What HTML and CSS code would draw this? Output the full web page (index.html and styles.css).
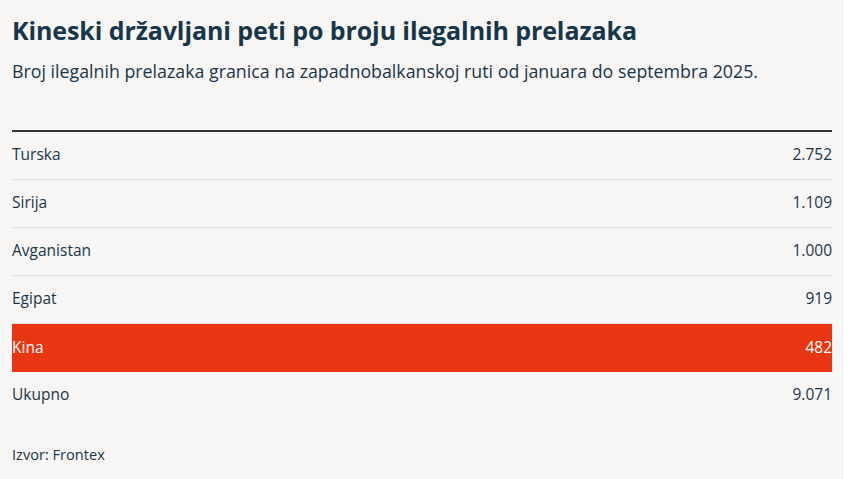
FILE: index.html
```html
<!DOCTYPE html>
<html lang="sr">
<head>
<meta charset="utf-8">
<link rel="stylesheet" href="styles.css">
<title>Kineski državljani</title>
</head>
<body>
<div class="page">
  <h1 class="title">Kineski državljani peti po broju ilegalnih prelazaka</h1>
  <p class="subtitle">Broj ilegalnih prelazaka granica na zapadnobalkanskoj ruti od januara do septembra 2025.</p>
  <div class="table">
    <div class="row"><span>Turska</span><span>2.752</span></div>
    <div class="row"><span>Sirija</span><span>1.109</span></div>
    <div class="row"><span>Avganistan</span><span>1.000</span></div>
    <div class="row"><span>Egipat</span><span>919</span></div>
    <div class="row highlight"><span>Kina</span><span>482</span></div>
    <div class="row last"><span>Ukupno</span><span>9.071</span></div>
  </div>
  <p class="source">Izvor: Frontex</p>
</div>
</body>
</html>
```
FILE: styles.css
```css
html, body {
  margin: 0;
  padding: 0;
  background: #ffffff;
}
.page {
  width: 820px;
  height: 479px;
  padding: 0 12px;
  background: #f7f6f5;
  font-family: "Open Sans", "Noto Sans", sans-serif;
  color: #1b3547;
  overflow: hidden;
}
.title {
  margin: 0;
  padding-top: 13px;
  font-size: 25px;
  line-height: 34px;
  font-weight: 700;
  letter-spacing: -0.1px;
  color: #17364a;
}
.subtitle {
  margin: 11px 0 0;
  font-size: 17.8px;
  line-height: 26px;
  color: #1b3547;
}
.table {
  margin-top: 46px;
  border-top: 2px solid #333333;
}
.row {
  display: flex;
  justify-content: space-between;
  align-items: center;
  height: 44px;
  padding-bottom: 3px;
  border-bottom: 1px solid #e2e1df;
  font-size: 15.5px;
}
.row.highlight {
  background: #e83613;
  color: #ffffff;
  height: 45px;
  border-bottom: none;
}
.row.last {
  border-bottom: none;
}
.source {
  margin: 25px 0 0;
  font-size: 14.6px;
  line-height: 20px;
}
```
